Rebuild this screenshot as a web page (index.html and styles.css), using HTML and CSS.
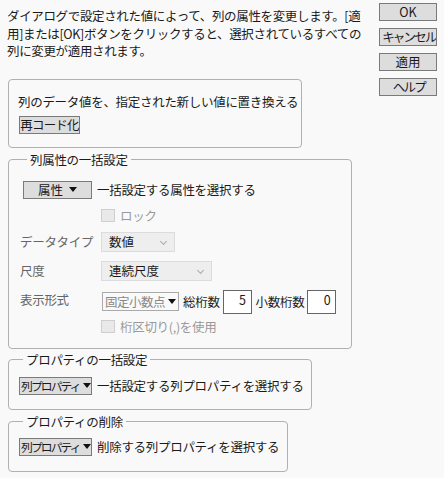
FILE: index.html
```html
<!DOCTYPE html>
<html lang="ja">
<head>
<meta charset="utf-8">
<link rel="stylesheet" href="styles.css">
</head>
<body>
<div class="dialog">
  <div class="main">
    <p class="desc">ダイアログで設定された値によって、列の属性を変更します。[適<br>用]または[OK]ボタンをクリックすると、選択されているすべての<br>列に変更が適用されます。</p>

    <div class="box recode">
      <div class="line">列のデータ値を、指定された新しい値に置き換える</div>
      <button class="btn recode-btn">再コード化</button>
    </div>

    <fieldset class="group attrs">
      <legend>列属性の一括設定</legend>
      <div class="row first">
        <button class="btn menu attr-btn">属性 <span class="tri"></span></button>
        <span>一括設定する属性を選択する</span>
      </div>
      <div class="form">
        <div class="ctl chk-row"><span class="chk"></span><span class="dis">ロック</span></div>
        <div class="lbl">データタイプ</div>
        <div class="ctl"><span class="dd w74">数値<span class="chev"></span></span></div>
        <div class="lbl">尺度</div>
        <div class="ctl"><span class="dd w111">連続尺度<span class="chev"></span></span></div>
        <div class="lbl">表示形式</div>
        <div class="ctl fmt">
          <span class="sel">固定小数点<span class="tri"></span></span>
          <span class="sp">総桁数</span>
          <span class="num">5</span>
          <span class="sp">小数桁数</span>
          <span class="num">0</span>
        </div>
        <div class="ctl chk-row"><span class="chk"></span><span class="dis">桁区切り(,)を使用</span></div>
      </div>
    </fieldset>

    <fieldset class="group props">
      <legend>プロパティの一括設定</legend>
      <div class="row">
        <button class="btn menu prop-btn"><span class="narrow">列プロパティ</span><span class="tri"></span></button>
        <span>一括設定する列プロパティを選択する</span>
      </div>
    </fieldset>

    <fieldset class="group del">
      <legend>プロパティの削除</legend>
      <div class="row">
        <button class="btn menu prop-btn"><span class="narrow">列プロパティ</span><span class="tri"></span></button>
        <span>削除する列プロパティを選択する</span>
      </div>
    </fieldset>
  </div>

  <div class="side">
    <button class="btn act">OK</button>
    <button class="btn act"><span class="kana">キャンセル</span></button>
    <button class="btn act">適用</button>
    <button class="btn act"><span class="kana">ヘルプ</span></button>
  </div>
</div>
</body>
</html>
```

FILE: styles.css
```css
* { box-sizing: border-box; }
html, body { margin: 0; padding: 0; }
body {
  background: #f9f9f9;
  color: #1a1a1a;
  font-family: "Noto Sans CJK JP", "Noto Sans", sans-serif;
  font-size: 12.5px;
  width: 444px;
  height: 478px;
  overflow: hidden;
  white-space: nowrap;
}
.dialog { display: flex; }
.main { width: 370px; padding-left: 8px; }
.desc {
  margin: 7px 0 0 -1px;
  line-height: 17.5px;
  letter-spacing: -0.35px;
}
.btn {
  font: inherit;
  color: #1a1a1a;
  background: #dddddd;
  border: 1px solid #7a7a7a;
  border-radius: 0;
  padding: 0;
  height: 18px;
  line-height: 16px;
  margin: 0;
  display: inline-flex;
  align-items: center;
  justify-content: center;
  white-space: nowrap;
  overflow: hidden;
}
.box {
  margin-top: 19px;
  width: 294px;
  height: 69px;
  border: 1px solid #b0b0b0;
  border-radius: 4px;
  padding: 14px 0 0 9px;
}
.line { line-height: 16px; height: 16px; letter-spacing: -0.3px; }
.recode-btn { margin-top: 6px; width: 61px; margin-left: 1px; letter-spacing: -0.8px; }

.group {
  margin: 0;
  border: 1px solid #b0b0b0;
  border-radius: 4px;
  padding: 0;
  min-width: 0;
}
.group legend {
  padding: 0 3px;
  margin-left: 4px;
  line-height: 16px;
  height: 16px;
  letter-spacing: -0.3px;
}
.attrs { margin-top: 4px; width: 344px; height: 197px; padding: 13px 0 0 14px; }
.props { margin-top: 3px; width: 304px; height: 58px; padding: 9px 0 0 10px; }
.del { margin-top: 4px; width: 280px; height: 58px; padding: 8px 0 0 10px; }

.row { display: flex; align-items: center; gap: 5px; height: 18px; letter-spacing: -0.3px; }
.menu { justify-content: flex-start; gap: 0; }
.tri {
  display: inline-block;
  flex: none;
  width: 0; height: 0;
  border-left: 4.5px solid transparent;
  border-right: 4.5px solid transparent;
  border-top: 5px solid #111;
  margin-left: 5px;
}
.attr-btn { width: 69px; padding-left: 14px; letter-spacing: 0; }
.attr-btn .tri { margin-left: 6px; }
.prop-btn { width: 73px; padding-left: 1px; }
.narrow { font-size: 11.8px; letter-spacing: -1.9px; }
.prop-btn .tri { margin-left: 3px; }
.kana { letter-spacing: -1.8px; margin-right: -1.8px; }

.form {
  display: grid;
  grid-template-columns: 81px auto;
  margin-top: 10px;
  margin-left: -3px;
}
.form > .chk-row { grid-column: 2; }
.lbl { grid-column: 1; color: #666; line-height: 16px; padding-top: 2px; letter-spacing: -0.3px; }
.ctl { display: flex; align-items: center; }
.chk-row { height: 14px; gap: 5px; }
.chk {
  width: 14px; height: 13px;
  border: 1px solid #cfcfcf;
  background: #e9e9e9;
}
.dis { color: #999; letter-spacing: -0.3px; }
.attrs .form > .chk-row:first-child { margin-bottom: 9px; }
.dd {
  height: 20px;
  background: #eeeeee;
  border: 1px solid #dcdcdc;
  padding-left: 7px;
  display: flex;
  align-items: center;
  position: relative;
}
.w74 { width: 74px; margin-bottom: 9px; }
.w111 { width: 111px; margin-bottom: 9px; }
.chev {
  position: absolute;
  right: 8px; top: 6px;
  width: 5px; height: 5px;
  border-right: 1px solid #aaa;
  border-bottom: 1px solid #aaa;
  transform: rotate(45deg);
}
.fmt { height: 24px; margin-left: 1px; letter-spacing: -0.3px; }
.sel {
  width: 77px; height: 19px;
  border: 1px solid #aaa;
  background: #f9f9f9;
  color: #888;
  display: flex; align-items: center;
  padding-left: 2px;
  letter-spacing: -0.5px;
}
.sel .tri { margin-left: 3px; }
.sp { margin-left: 4px; margin-right: 3px; }
.num {
  width: 29px; height: 24px;
  border: 1px solid #666;
  background: #fff;
  text-align: right;
  padding-right: 5px;
  line-height: 18px;
  align-self: flex-start;
}
.fmt + .chk-row { margin-top: 6px; }

.side {
  display: flex;
  flex-direction: column;
  gap: 7px;
  padding-top: 3px;
  margin-left: 9px;
}
.act { width: 58px; height: 18px; }
```
